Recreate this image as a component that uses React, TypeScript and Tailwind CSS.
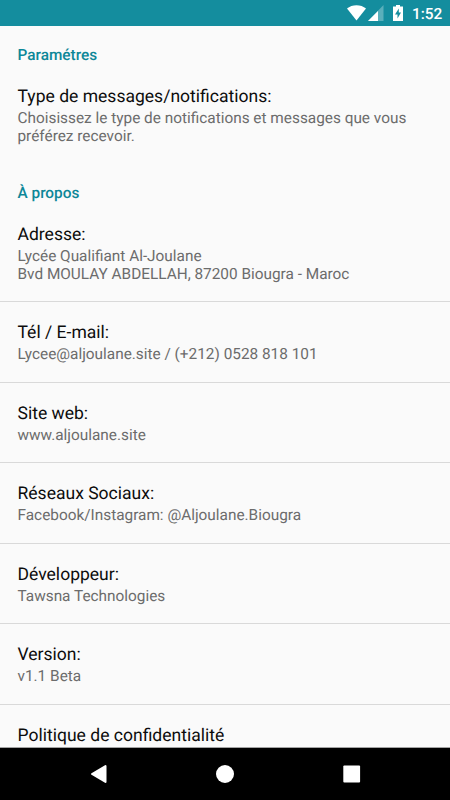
import React from 'react';

interface PreferenceProps {
  title: string;
  lines: string[];
}

const Preference: React.FC<PreferenceProps> = ({ title, lines }) => (
  <li className="px-[17.5px] pt-[19px] pb-[18.5px]">
    <h3 className="text-[17.55px] leading-[24px] text-[#0c0c0c]">{title}</h3>
    {lines.map((line) => (
      <p key={line} className="text-[15.36px] leading-[18px] text-[#6c6c6c] whitespace-nowrap">
        {line}
      </p>
    ))}
  </li>
);

const about: PreferenceProps[] = [
  { title: 'Adresse:', lines: ['Lycée Qualifiant Al-Joulane', 'Bvd MOULAY ABDELLAH, 87200 Biougra - Maroc'] },
  { title: 'Tél / E-mail:', lines: ['Lycee@aljoulane.site / (+212) 0528 818 101'] },
  { title: 'Site web:', lines: ['www.aljoulane.site'] },
  { title: 'Réseaux Sociaux:', lines: ['Facebook/Instagram: @Aljoulane.Biougra'] },
  { title: 'Développeur:', lines: ['Tawsna Technologies'] },
  { title: 'Version:', lines: ['v1.1 Beta'] },
  { title: 'Politique de confidentialité', lines: [] },
];

export default function App() {
  return (
    <div className="flex h-[800px] w-[450px] flex-col overflow-hidden bg-[#fafafa] font-['Roboto',sans-serif] [text-rendering:geometricPrecision]">
      {/* Status bar */}
      <header className="flex h-[26px] shrink-0 items-center justify-end bg-[#148d9e] pr-[9px] text-white">
        <svg className="mr-[9px] shrink-0" width="56" height="26" viewBox="0 0 56 26" fill="currentColor">
          <path d="M0 8.500C5 4 14 4 19 8.500L9.500 20.500Z" />
          <path d="M36.500 5V21H21Z" opacity=".3" />
          <path d="M31 11V21H21Z" />
          <path fillRule="evenodd" d="M46 6.500H49V5H53V6.500H56V21H46ZM51.800 8.500L48 14.500H50.500V18.500L54 12.500H51.800Z" />
        </svg>
        <span className="w-[29px] pt-[2px] text-[15.36px] leading-[18px] font-medium">1:52</span>
      </header>

      <main className="min-h-0 flex-1 overflow-hidden">
        <h2 className="px-[17.5px] pt-[18px] text-[15.36px] leading-[22px] font-medium text-[#0d8798]">Paramétres</h2>
        <ul>
          <Preference
            title="Type de messages/notifications:"
            lines={['Choisissez le type de notifications et messages que vous', 'préférez recevoir.']}
          />
        </ul>
        <h2 className="px-[17.5px] pt-[18.2px] text-[15.36px] leading-[22px] font-medium text-[#0d8798]">À propos</h2>
        <ul className="divide-y divide-[#d9d9d9]">
          {about.map((item) => (
            <Preference key={item.title} {...item} />
          ))}
        </ul>
      </main>

      {/* Navigation bar */}
      <nav className="flex h-[53px] shrink-0 items-center border-t border-[#a3a3a3] bg-black text-white">
        <svg width="450" height="52" viewBox="0 1 450 52" fill="currentColor">
          <path
            d="M92 27L105.500 19V35Z"
            stroke="currentColor"
            strokeWidth="2"
            strokeLinejoin="round"
          />
          <circle cx="225" cy="27" r="9" />
          <rect x="343.300" y="18.500" width="16.800" height="17" rx="1" />
        </svg>
      </nav>
    </div>
  );
}
